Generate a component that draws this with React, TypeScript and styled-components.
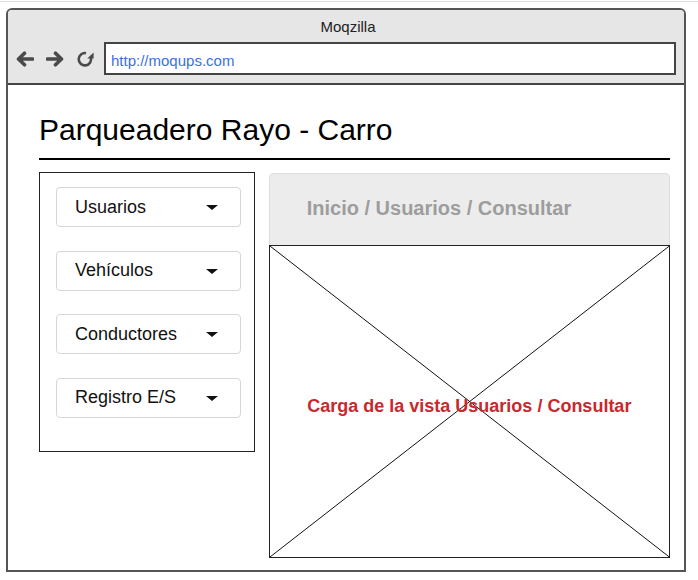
import React from "react";
import styled, { createGlobalStyle } from "styled-components";

const GlobalStyle = createGlobalStyle`
  html, body {
    margin: 0;
    padding: 0;
    background: #ffffff;
    font-family: "Liberation Sans", Arial, sans-serif;
  }
  * { box-sizing: border-box; }
`;

const Page = styled.div`
  width: 698px;
  height: 580px;
  padding: 1px 0 0 6px;
`;

const TopRule = styled.div`
  height: 1px;
  margin-left: -6px;
  background: #dddddd;
`;

const Frame = styled.div`
  margin-top: 6px;
  width: 680px;
  height: 564px;
  border: 2px solid #555555;
  border-radius: 6px 6px 0 0;
  display: flex;
  flex-direction: column;
  overflow: hidden;
`;

const TitleBar = styled.div`
  background: #e6e6e6;
  border-bottom: 2px solid #444444;
  height: 75px;
  display: flex;
  flex-direction: column;
  padding-top: 8px;
`;

const WindowTitle = styled.div`
  text-align: center;
  font-size: 15px;
  line-height: 18px;
  height: 18px;
  color: #222222;
  padding-left: 4px;
`;

const Toolbar = styled.div`
  margin-top: 6px;
  display: flex;
  align-items: center;
  padding: 0 8px;
  gap: 12px;
`;

const NavIcon = styled.svg`
  display: block;
  flex: none;
`;

const AddressBar = styled.div`
  flex: 1;
  height: 33px;
  border: 2px solid #444444;
  background: #ffffff;
  display: flex;
  align-items: center;
  padding: 4px 0 0 5px;
  margin-left: -2px;
  font-size: 15px;
  color: #3d6fe3;
`;

const Content = styled.div`
  flex: 1;
  background: #ffffff;
  padding: 28px 14px 0 31px;
`;

const Heading = styled.h1`
  margin: 0;
  font-weight: normal;
  font-size: 30px;
  line-height: normal;
  color: #000000;
  padding-bottom: 11px;
  border-bottom: 2px solid #000000;
`;

const Main = styled.div`
  margin-top: 12px;
  display: flex;
  gap: 14px;
  align-items: flex-start;
`;

const Sidebar = styled.nav`
  width: 216px;
  height: 280px;
  border: 1px solid #222222;
  padding: 14px 13px 0 16px;
  display: flex;
  flex-direction: column;
  gap: 23.5px;
`;

const MenuButton = styled.div`
  height: 40px;
  border: 1px solid #d6d6d6;
  border-radius: 4px;
  display: flex;
  align-items: center;
  justify-content: space-between;
  padding: 0 22px 0 18px;
  font-size: 18px;
  color: #111111;
`;

const Caret = styled.span`
  width: 0;
  height: 0;
  border-left: 6px solid transparent;
  border-right: 6px solid transparent;
  border-top: 5px solid #111111;
  margin-top: 1px;
`;

const Panel = styled.section`
  width: 402px;
  margin-top: 1px;
  display: flex;
  flex-direction: column;
`;

const Breadcrumb = styled.div`
  height: 73px;
  background: #ececec;
  border: 1px solid #dcdcdc;
  border-radius: 4px 4px 0 0;
  padding: 23px 0 0 37px;
  font-size: 20px;
  font-weight: bold;
  color: #9d9d9d;
`;

const Placeholder = styled.div`
  position: relative;
  margin-top: -1px;
  height: 313px;
  border: 1px solid #222222;
  display: flex;
  align-items: center;
  justify-content: center;
  padding-top: 9px;
`;

const Cross = styled.svg`
  position: absolute;
  inset: 0;
  width: 100%;
  height: 100%;
`;

const LoadText = styled.span`
  position: relative;
  font-size: 18px;
  font-weight: bold;
  color: #c9282d;
`;

const menuItems = ["Usuarios", "Vehículos", "Conductores", "Registro E/S"];

export default function App() {
  return (
    <>
      <GlobalStyle />
      <Page>
        <TopRule />
        <Frame>
          <TitleBar>
            <WindowTitle>Moqzilla</WindowTitle>
            <Toolbar>
              <NavIcon width="18" height="16" viewBox="0 0 18 16">
                <path
                  d="M16.5 8H3 M8.5 2.2 L2.5 8 L8.5 13.8"
                  fill="none"
                  stroke="#4a4a4a"
                  strokeWidth="3.6"
                  strokeLinecap="round"
                  strokeLinejoin="round"
                />
              </NavIcon>
              <NavIcon width="18" height="16" viewBox="0 0 18 16">
                <path
                  d="M1.5 8H15 M9.5 2.2 L15.5 8 L9.5 13.8"
                  fill="none"
                  stroke="#4a4a4a"
                  strokeWidth="3.6"
                  strokeLinecap="round"
                  strokeLinejoin="round"
                />
              </NavIcon>
              <NavIcon width="18" height="18" viewBox="0 0 18 18">
                <path
                  d="M10 3.1 A6.2 6.2 0 1 0 14.9 7.6"
                  fill="none"
                  stroke="#4a4a4a"
                  strokeWidth="2.6"
                />
                <polygon points="11.2,8.6 17.6,8.6 17.6,2.6" fill="#4a4a4a" />
              </NavIcon>
              <AddressBar>http://moqups.com</AddressBar>
            </Toolbar>
          </TitleBar>
          <Content>
            <Heading>Parqueadero Rayo - Carro</Heading>
            <Main>
              <Sidebar>
                {menuItems.map((item) => (
                  <MenuButton key={item}>
                    <span>{item}</span>
                    <Caret />
                  </MenuButton>
                ))}
              </Sidebar>
              <Panel>
                <Breadcrumb>Inicio / Usuarios / Consultar</Breadcrumb>
                <Placeholder>
                  <Cross viewBox="0 0 100 100" preserveAspectRatio="none">
                    <line x1="0" y1="0" x2="100" y2="100" stroke="#111" strokeWidth="1" vectorEffect="non-scaling-stroke" />
                    <line x1="100" y1="0" x2="0" y2="100" stroke="#111" strokeWidth="1" vectorEffect="non-scaling-stroke" />
                  </Cross>
                  <LoadText>Carga de la vista Usuarios / Consultar</LoadText>
                </Placeholder>
              </Panel>
            </Main>
          </Content>
        </Frame>
      </Page>
    </>
  );
}
